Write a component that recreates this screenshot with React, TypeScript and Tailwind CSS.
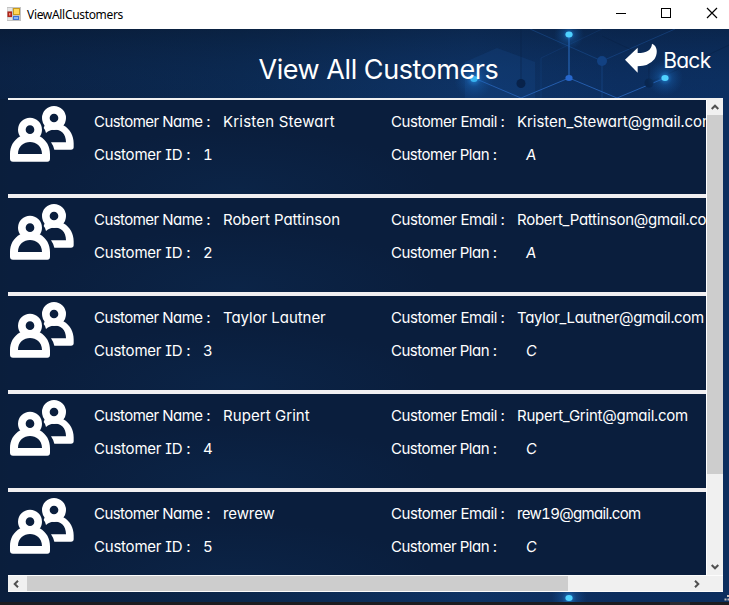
import type { ReactNode } from "react";

type Customer = {
  id: string;
  name: string;
  nameClass: string;
  email: string;
  emailClass: string;
  plan: string;
};

const customers: Customer[] = [
  { id: "1", name: "Kristen Stewart", nameClass: "tracking-[0.2px]", email: "Kristen_Stewart@gmail.com", emailClass: "tracking-[-0.06px]", plan: "A" },
  { id: "2", name: "Robert Pattinson", nameClass: "tracking-[-0.05px]", email: "Robert_Pattinson@gmail.com", emailClass: "tracking-[-0.26px]", plan: "A" },
  { id: "3", name: "Taylor Lautner", nameClass: "tracking-[-0.05px]", email: "Taylor_Lautner@gmail.com", emailClass: "tracking-[-0.32px]", plan: "C" },
  { id: "4", name: "Rupert Grint", nameClass: "tracking-[0.07px]", email: "Rupert_Grint@gmail.com", emailClass: "tracking-[-0.23px]", plan: "C" },
  { id: "5", name: "rewrew", nameClass: "tracking-[-0.1px]", email: "rew19@gmail.com", emailClass: "tracking-[-0.68px]", plan: "C" },
];

function FormIcon() {
  return (
    <svg width="14" height="14" viewBox="0 0 14 14" className="shrink-0">
      <rect width="14" height="14" fill="#c3c3c3" />
      <rect x="0.5" y="4.5" width="4.5" height="5.5" fill="#b02318" />
      <rect x="2" y="6" width="1.5" height="2.5" fill="#ee8b78" />
      <rect x="6" y="1" width="7" height="7" fill="#c99a1c" />
      <rect x="7" y="2" width="5" height="5" fill="#ffd758" />
      <rect x="6" y="9" width="6" height="4" fill="#3c72d2" />
      <rect x="7" y="10" width="4" height="2" fill="#86b4f5" />
      <path d="M0.5 1H5V4H0.5zM0.5 10.5H5V13H0.5z" fill="#e4e4e4" />
    </svg>
  );
}

function PeopleIcon() {
  return (
    <svg width="72" height="66" viewBox="24 6 216 198" className="shrink-0">
      <circle cx="162" cy="60" r="24.500" fill="none" stroke="#fff" strokeWidth="23" />
      <path fill="#fff" fillRule="evenodd" d="M134 82L190 82C211 93 221 115 221 136V148Q221 155 213 155H163Q160 143 153 133H198C198 92 158 86 138 105Q136 95 131 90Z" />
      <circle cx="90" cy="95" r="24.500" fill="none" stroke="#fff" strokeWidth="23" />
      <path fill="#fff" fillRule="evenodd" d="M61 115C40 127 30 146 30 169V182Q30 191 39 191H142Q150 191 150 182V169C150 146 140 127 119 115Q90 126 61 115ZM54 168H126C126 120 54 120 54 168Z" />
    </svg>
  );
}

function Backdrop() {
  return (
    <svg className="absolute inset-0" width="729" height="576" viewBox="0 29 729 576" aria-hidden="true">
      <defs>
        <linearGradient id="base" x1="0" y1="0" x2="1" y2="0">
          <stop offset="0" stopColor="#0a1e3c" />
          <stop offset="0.33" stopColor="#0b274c" />
          <stop offset="0.65" stopColor="#0e3263" />
          <stop offset="0.85" stopColor="#0c2d5d" />
          <stop offset="1" stopColor="#0c2e5e" />
        </linearGradient>
        <linearGradient id="top" x1="0" y1="0" x2="0" y2="1">
          <stop offset="0" stopColor="#081b36" stopOpacity="0.45" />
          <stop offset="1" stopColor="#0e3a78" stopOpacity="0.12" />
        </linearGradient>
        <radialGradient id="glow">
          <stop offset="0" stopColor="#2f9ef5" stopOpacity="0.75" />
          <stop offset="0.4" stopColor="#1b72ca" stopOpacity="0.3" />
          <stop offset="1" stopColor="#1257a5" stopOpacity="0" />
        </radialGradient>
      </defs>
      <rect y="29" width="729" height="576" fill="url(#base)" />
      <rect y="29" width="729" height="70" fill="url(#top)" />
      <path d="M497 48L535 62V98H465V62Z" fill="#164a91" opacity="0.25" />
      <g fill="none" stroke="#215aa8" strokeWidth="1">
        <path d="M569 34V78" stroke="#2b6fc4" />
        <path d="M474 78L521 98L569 78L617 98L665 78" stroke="#245cab" />
        <path d="M530 29L602 61L675 29M602 61V98" opacity="0.4" />
        <path d="M541 98V58L602 29" opacity="0.2" />
      </g>
      <path d="M521 29V83M649 83V58L602 36M649 83L729 45" fill="none" stroke="#082044" opacity="0.5" />
      <circle cx="521" cy="83.500" r="4.500" fill="#08224a" />
      <circle cx="649" cy="83" r="4.500" fill="#09264f" />
      <circle cx="602" cy="61" r="5" fill="#124182" />
      <circle cx="569" cy="34.500" r="15" fill="url(#glow)" />
      <circle cx="665" cy="78" r="18" fill="url(#glow)" />
      <circle cx="474" cy="79" r="20" fill="url(#glow)" />
      <circle cx="569" cy="598" r="18" fill="url(#glow)" />
      <ellipse cx="569" cy="34.500" rx="3.600" ry="3" fill="#4fd2ff" />
      <ellipse cx="665" cy="78" rx="3.600" ry="3" fill="#4fd2ff" />
      <ellipse cx="474" cy="79" rx="3.600" ry="3" fill="#38b4f0" />
      <ellipse cx="569" cy="78" rx="3.600" ry="3" fill="#2767cd" />
      <ellipse cx="569" cy="598" rx="3.600" ry="3" fill="#4fd2ff" />
      <rect y="602" width="729" height="3" fill="#1c1c20" />
      <rect x="670" y="602" width="20" height="3" fill="#2b2a30" />
      <path d="M727 595h2v2h-2zM724.500 598.500h2v2h-2zM727.500 598.500h2v2h-2z" fill="#c6c3c0" />
    </svg>
  );
}

function Chevron({ className }: { className: string }) {
  return (
    <svg width="8" height="6" viewBox="0 0 8 6" className={className}>
      <path d="M0.700 5L4 1.700L7.300 5" fill="none" stroke="#505050" strokeWidth="2" />
    </svg>
  );
}

function Field({ label, labelClass, labelWidth, children }: { label: string; labelClass: string; labelWidth: string; children: ReactNode }) {
  return (
    <div className="flex h-[33px] items-center">
      <span className={`shrink-0 ${labelWidth} ${labelClass}`}>{label}</span>
      {children}
    </div>
  );
}

function CustomerRow({ customer }: { customer: Customer }) {
  return (
    <div className="flex h-[98px] shrink-0 border-b-4 border-[#f1eff1] bg-[#0a1e3d] bg-[radial-gradient(ellipse_200px_60px_at_230px_90px,#0b2447,transparent)] text-[15px] leading-none whitespace-nowrap">
      <PeopleIcon />
      <div className="w-[297px] shrink-0 pt-[5px] pl-[14px]">
        <Field label="Customer Name :" labelWidth="w-[129px]" labelClass="tracking-[-0.55px]">
          <span className={customer.nameClass}>{customer.name}</span>
        </Field>
        <Field label="Customer ID :" labelWidth="w-[109px]" labelClass="tracking-[-0.22px]">
          <span className="[font-feature-settings:'tnum']">{customer.id}</span>
        </Field>
      </div>
      <div className="pt-[5px] pl-[14px]">
        <Field label="Customer Email :" labelWidth="w-[126px]" labelClass="tracking-[-0.43px]">
          <span className={`[font-feature-settings:'cv11','tnum'] ${customer.emailClass}`}>{customer.email}</span>
        </Field>
        <Field label="Customer Plan :" labelWidth="w-[134.500px]" labelClass="tracking-[-0.5px]">
          <span className="-skew-x-6">{customer.plan}</span>
        </Field>
      </div>
    </div>
  );
}

export default function App() {
  return (
    <div className="flex h-[605px] w-[729px] flex-col overflow-hidden">
      <div className="flex h-[29px] shrink-0 items-center bg-white pl-[7px] text-black">
        <div className="flex -translate-y-px items-center gap-1.5">
          <FormIcon />
          <span className="translate-y-px font-['Noto_Sans','Open_Sans',sans-serif] text-[12px] tracking-[-0.32px]">ViewAllCustomers</span>
        </div>
        <svg width="102" height="12" viewBox="0 0 102 12" className="mr-[11px] -mt-1 ml-auto shrink-0" fill="none" stroke="#000" strokeWidth="1">
          <path d="M0 6.500H10" />
          <rect x="45.500" y="1.500" width="9" height="9" />
          <path d="M91 1L101 11M101 1L91 11" strokeWidth="1.200" />
        </svg>
      </div>

      <div className="relative flex-1 font-['Inter','Liberation_Sans',sans-serif] text-white [font-feature-settings:'cv11','cv08']">
        <Backdrop />
        <div className="relative flex h-full flex-col px-2">
          <div className="flex h-[69px] shrink-0 justify-between pl-[250.500px]">
            <h1 className="pt-[27px] text-[27px] leading-[28px] tracking-[-0.45px] whitespace-nowrap">View All Customers</h1>
            <div className="flex gap-[4px] pt-[13px] pr-[10.500px]">
              <svg width="35" height="32" viewBox="45 35 105 96">
                <path fill="#fff" d="M48 88L86 52V68Q127 68 129 40C149 49 145 74 136 87Q119 108 86 108V127Z" />
              </svg>
              <span className="pt-[6px] text-[21px] leading-[26px] tracking-[-0.7px]">Back</span>
            </div>
          </div>

          <div className="flex h-[494px] w-[715px] flex-col border-t-2 border-[#f1f1f1] bg-[#f0f0f0]">
            <div className="flex h-[475px]">
              <div className="flex w-[698px] flex-col overflow-hidden">
                {customers.map((customer) => (
                  <CustomerRow key={customer.id} customer={customer} />
                ))}
              </div>
              <div className="flex w-[17px] flex-col items-center border-l border-white">
                <Chevron className="mt-1 mb-[5px] shrink-0" />
                <div className="h-[359px] w-4 shrink-0 bg-[#cdcdcd]" />
                <Chevron className="mt-auto mb-[5px] shrink-0 rotate-180" />
              </div>
            </div>
            <div className="flex h-[17px] items-center border-y border-white/80 pr-[22px]">
              <Chevron className="mr-[7px] ml-1 shrink-0 -rotate-90" />
              <div className="h-[15px] w-[541px] bg-[#cdcdcd]" />
              <Chevron className="ml-auto shrink-0 rotate-90" />
            </div>
          </div>
        </div>
      </div>
    </div>
  );
}
